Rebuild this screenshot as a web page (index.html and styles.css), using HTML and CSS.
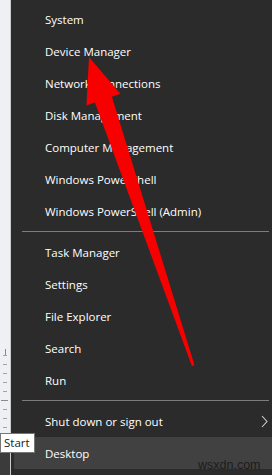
FILE: index.html
```html
<!DOCTYPE html>
<html lang="en">
<head>
<meta charset="utf-8">
<title>Win+X menu</title>
<link rel="stylesheet" href="styles.css">
</head>
<body>
<div class="screen">
  <div class="ruler">
    <div class="ruler-light"></div>
    <div class="ruler-dark"></div>
  </div>
  <nav class="menu">
    <ul class="group">
      <li class="item">System</li>
      <li class="item">Device Manager</li>
      <li class="item">Network Connections</li>
      <li class="item">Disk Management</li>
      <li class="item">Computer Management</li>
      <li class="item">Windows PowerShell</li>
      <li class="item">Windows PowerShell (Admin)</li>
    </ul>
    <div class="sep"></div>
    <ul class="group">
      <li class="item">Task Manager</li>
      <li class="item">Settings</li>
      <li class="item">File Explorer</li>
      <li class="item">Search</li>
      <li class="item">Run</li>
    </ul>
    <div class="sep"></div>
    <ul class="group">
      <li class="item item-sub">Shut down or sign out
        <svg class="chev" width="7" height="13" viewBox="0 0 7 13"><polyline points="1,1 6,6.5 1,12" fill="none" stroke="#d0d0d0" stroke-width="1.1"/></svg>
      </li>
      <li class="item item-active">Desktop</li>
    </ul>
  </nav>
</div>
<div class="tooltip">Start</div>
<svg class="arrow" width="272" height="475" viewBox="0 0 272 475">
  <polygon fill="#f60000" points="89,57 120.4,93.8 111.9,96.7 194.3,364.4 193,366.3 191.7,365.6 94.9,102.5 86.4,105.4"/>
</svg>
<div class="watermark">wsxdn.com</div>
</body>
</html>
```
FILE: styles.css
```css
html, body {
  margin: 0;
  padding: 0;
}
body {
  width: 272px;
  height: 475px;
  overflow: hidden;
  position: relative;
  background: #2b2b2b;
  font-family: "Open Sans", "Noto Sans", sans-serif;
}
.screen {
  display: flex;
  height: 475px;
}
.ruler {
  width: 11px;
  display: flex;
  flex-direction: column;
  border-right: 1px solid #c9cbcf;
  box-sizing: border-box;
}
.ruler-light {
  flex: 1;
  background-color: #eef0f3;
  background-image:
    linear-gradient(#8a8a8a, #8a8a8a),
    linear-gradient(#8a8a8a, #8a8a8a),
    repeating-linear-gradient(to bottom, #a3a3a3 0 1px, transparent 1px 9px);
  background-size: 1px 6px, 7px 1px, 4px 80px;
  background-position: 5px 349px, 1px 400px, 3px 355px;
  background-repeat: no-repeat;
}
.ruler-dark {
  height: 22px;
  background: #3b3b3b;
}
.menu {
  flex: 1;
  padding-top: 3px;
  background: #2b2b2b;
}
.group {
  list-style: none;
  margin: 0;
  padding: 0;
}
.item {
  height: 32px;
  display: flex;
  align-items: center;
  padding-left: 34px;
  color: #ffffff;
  font-size: 11.5px;
  white-space: nowrap;
}
.item-sub {
  justify-content: space-between;
  padding-right: 4px;
}
.item-active {
  margin-left: 3px;
  padding-left: 31px;
  background: #414141;
}
.sep {
  height: 1px;
  margin: 4px 3px 4px 11px;
  background: #7d7d7d;
}
.tooltip {
  position: absolute;
  left: 0;
  top: 433px;
  width: 35px;
  height: 20px;
  box-sizing: border-box;
  border: 1px solid #767676;
  background: #ffffff;
  color: #1a1a1a;
  font-size: 11.5px;
  line-height: 18px;
  padding-left: 3px;
}
.arrow {
  position: absolute;
  left: 0;
  top: 0;
  pointer-events: none;
}
.watermark {
  position: absolute;
  left: 198px;
  top: 459px;
  font-family: "Liberation Sans", Arial, sans-serif;
  font-size: 12.5px;
  line-height: 1;
  color: #1c1c1c;
}
```
